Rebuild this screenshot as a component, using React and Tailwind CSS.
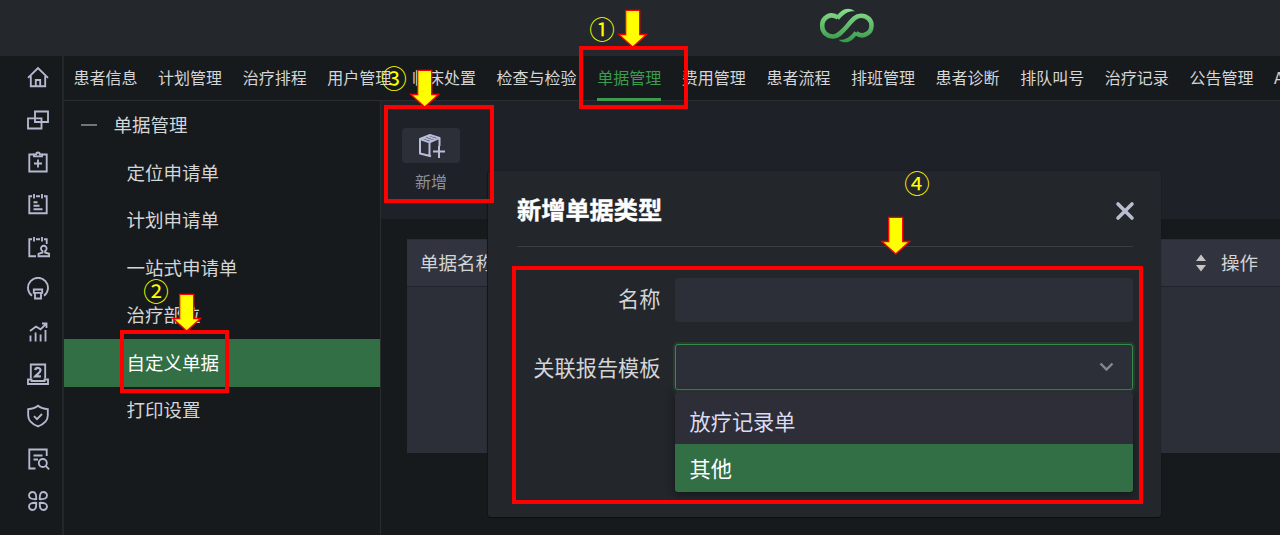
import React from "react";

const tabs = ["患者信息", "计划管理", "治疗排程", "用户管理", "临床处置", "检查与检验", "单据管理", "费用管理", "患者流程", "排班管理", "患者诊断", "排队叫号", "治疗记录", "公告管理", "AI"];
const menu = ["定位申请单", "计划申请单", "一站式申请单", "治疗部位", "自定义单据", "打印设置"];

const railIcons = [
  <><path d="M2 12.800 12 3l10 9.800" /><path d="M4.800 11V21.200h14.400V11" /><path d="M9.800 21v-6h4.400v6" /></>,
  <><path d="M9 3.500h13v10.500H9z" /><path d="M2 10.300h13.500v10.200H2z" /></>,
  <><path d="M8 4.500H3.300v17h17.400v-17H16" /><path d="M8 6.300h8V4.300h-2.200a1.800 1.800 0 0 0-3.600 0H8z" /><path d="M12 9.500v8M8 13.500h8" /></>,
  <><path d="M6 4.200H3.300V21.200h17.400V4.200H18M10 4.200h4" /><path d="M8 2v4.500M16 2v4.500M7.500 10.200h4M7.500 13.700h6M7.500 17.200h9" /></>,
  <><path d="M6 4.200H3.300V21.200H10M10 4.200h4M18 4.200h2.700V9" /><path d="M8 2v4.500M16 2v4.500" /><path d="M12.500 21.200v-2.400l4-1.300v-1.500a2.800 2.800 0 1 1 2.600 0v1.500l4 1.300v2.400z" /></>,
  <><path d="M6 18.800A10 10 0 1 1 18 18.800" /><path d="M7.800 12.500h8.400v3.400H7.800zM9 15.900h6V21.500H9z" /></>,
  <><path d="M4.500 21.500v-6M9.600 21.500v-9M14.600 21.500v-7M19.500 21.500V10" /><path d="M4 11 10 6.500l4.500 2.800L20.500 3.500M16 3.500h4.500V8" /></>,
  <><path d="M4.800 16.500V2.500h14.400v14" /><path d="M2 17.500h3.500v1.500h13v-1.500H22v4.500H2z" /><path d="M9.300 8.200c.3-3.200 5.700-2.800 5.200.3-.3 1.900-3.300 3.600-5.200 5.800h5.600" strokeWidth="2.200" /></>,
  <><path d="M12 1.800c2.700 2.200 6 3.200 9.800 3.300v6.500c0 5-4.300 8.800-9.800 10.800C6.500 20.400 2.200 16.600 2.200 11.600V5.100c3.800-.1 7.100-1.100 9.800-3.300z" /><path d="m8 12.200 3 3 5-5.200" /></>,
  <><path d="M9.500 21.500H3.300V2.500h17.400V9" /><path d="M7.500 8.500h9M7.500 12.500H12" /><circle cx="16.800" cy="16" r="4" /><path d="m19.700 18.900 3.400 3.400" /></>,
  <><path d="M10.200 10.200C10.400 5.500 9.500 3 6.700 3A3.600 3.600 0 0 0 3 6.600c0 2.900 2.700 3.700 7.200 3.600zM13.800 10.200C13.600 5.500 14.500 3 17.300 3A3.600 3.600 0 0 1 21 6.600c0 2.900-2.700 3.700-7.200 3.600zM10.200 13.800c.2 4.700-.7 7.200-3.500 7.200A3.600 3.600 0 0 1 3 17.400c0-2.900 2.700-3.700 7.200-3.600zM13.800 13.800c-.2 4.700.7 7.200 3.500 7.200a3.600 3.600 0 0 0 3.700-3.600c0-2.900-2.700-3.700-7.200-3.600z" /></>,
];

function Logo() {
  return (
    <svg className="mt-[7px] ml-[819px] h-[37px] w-[56px]" viewBox="0 0 56 37" fill="none">
      <defs>
        <linearGradient id="leaf" x1="0" y1="0" x2="0" y2="37" gradientUnits="userSpaceOnUse">
          <stop stopColor="#8ee08f" />
          <stop offset="1" stopColor="#319746" />
        </linearGradient>
      </defs>
      <path d="M19 10.600C11.500 5.500 3.200 10.500 3.200 18.500c0 7.500 6 11.500 11.300 11 4.800-.3 8-4.200 12-8.500 5-5.200 8.500-12.300 15.300-12.300 6.300 0 10.700 4.300 10.700 9.700 0 7.500-8.300 13-15.500 7.700" stroke="url(#leaf)" strokeWidth="4.600" />
      <path d="M17 10.200C22 2 29-.8 36 4.200c-6-.4-10.800 1.800-16 8.600zM38.500 26.500C33.500 35 26.500 38 19.500 32.800c6 .4 10.800-1.800 16-8.600z" fill="url(#leaf)" />
    </svg>
  );
}

function Arrow({ className }) {
  return (
    <svg className={"absolute h-[39px] w-[31px] " + className} viewBox="0 0 31 39">
      <path d="M8.700 1.300h14v24.200h6.800L15.700 38 1.900 25.500h6.800z" fill="#ff0" stroke="#f00" strokeWidth="1.300" />
    </svg>
  );
}

function Mark({ className, children }) {
  return <div className={"absolute h-[26px] w-[26px] text-center text-[25.500px] leading-[26px] text-[#ff0] " + className}>{children}</div>;
}

export default function App() {
  return (
    <div className="relative flex h-[535px] w-[1280px] flex-col overflow-hidden bg-[#171a1d] font-['Noto_Sans_CJK_SC',sans-serif] text-[#d4d5d6]">
      <header className="h-[56px] shrink-0 bg-[#24272c]">
        <Logo />
      </header>
      <div className="flex min-h-0 flex-1">
        <aside className="flex w-[64px] shrink-0 flex-col items-center gap-[18.400px] border-r-2 border-[#24262a] pt-[9.300px] pl-[14px]">
          {railIcons.map((icon, i) => (
            <svg key={i} className="h-6 w-6 shrink-0" viewBox="0 0 24 24" fill="none" stroke="#b5b9d0" strokeWidth="1.850">{icon}</svg>
          ))}
        </aside>
        <div className="flex min-w-0 flex-1 flex-col">
          <nav className="flex h-[45px] shrink-0 gap-[20.600px] border-b border-[#2a2c2e] pl-[9.500px] text-[16px] leading-[43px] whitespace-nowrap">
            {tabs.map((t) => (
              <div key={t} className={t === "单据管理" ? "relative shrink-0 text-[#3a9c4c] after:absolute after:inset-x-0 after:-bottom-px after:h-[3px] after:bg-[#3a9c4c]" : "shrink-0"}>{t}</div>
            ))}
          </nav>
          <div className="flex min-h-0 flex-1">
            <div className="flex w-[317px] shrink-0 flex-col border-r border-[#2a2c2e] text-[18.500px] whitespace-nowrap">
              <div className="flex h-[48px] items-center">
                <span className="ml-[17px] h-[1.500px] w-[16px] bg-[#70747d]" />
                <span className="ml-[16.500px]">单据管理</span>
              </div>
              {menu.map((m) => (
                <div key={m} className={m === "自定义单据" ? "flex h-[47.500px] items-center bg-[#326f44] pl-[62.500px] text-white" : "flex h-[47.500px] items-center pl-[62.500px]"}>{m}</div>
              ))}
            </div>
            <main className="flex min-w-0 flex-1 flex-col">
              <div className="h-[118px] shrink-0 bg-[#1f2129] pt-[27px] pl-[21px]">
                <div className="flex w-[58px] flex-col items-center">
                  <div className="flex h-[35px] w-full items-center justify-center rounded-sm bg-[#2c2f37]">
                    <svg className="h-[26px] w-[28px]" viewBox="0 0 28 26" fill="none" stroke="#b9bdd8" strokeWidth="2" strokeLinejoin="round">
                      <path d="M14 23.300 3 20.500V6L13 2l9.500 2.900v8M3 6l9.500 3.400 10-4.500M12.500 9.400v13.300M6.500 4.900l9.500 3M10 3.400l9 3.100M16 18.500h12M22 13v12" />
                    </svg>
                  </div>
                  <span className="mt-[6px] text-[16px] leading-6 text-[#8d909a]">新增</span>
                </div>
              </div>
              <section className="mt-[20px] ml-[26px] h-[214px] bg-[#2c2f37]">
                <div className="flex h-[48px] items-center border-t border-b border-t-[#2b2f34] border-b-[#20242a] bg-[#31343f] text-[18.500px]">
                  <span className="ml-[13px] w-[775px]">单据名称</span>
                  <svg className="h-[18px] w-[12px]" viewBox="0 0 12 18" fill="#c4c4c4"><path d="m6 0.500 5 6.500H1zM1 11h10l-5 6.500z" /></svg>
                  <span className="ml-[14px]">操作</span>
                </div>
              </section>
            </main>
          </div>
        </div>
      </div>

      <div className="absolute top-[171px] left-[488px] flex h-[346px] w-[673px] flex-col rounded-[3px] bg-[#23262b] pr-[28px] pl-[29px] shadow-[0_1px_1px_#0c0e10,-1px_0_1px_#14171a]">
        <div className="flex h-[76px] shrink-0 items-center justify-between border-b border-[#3a3d46] pt-[2px]">
          <h2 className="text-[24.200px] font-bold text-white [-webkit-text-stroke:0.400px_white]">新增单据类型</h2>
          <svg className="mt-[3px] -mr-[2px] h-5 w-5" viewBox="0 0 20 20" stroke="#b9bdd0" strokeWidth="3.600" strokeLinecap="round"><path d="m3 3 14 14M17 3 3 17" /></svg>
        </div>
        <div className="mt-[31px] flex h-[44px] items-center text-[21.200px]">
          <label className="-mt-[4px] w-[143.500px] text-right">名称</label>
          <div className="ml-[14.500px] h-full flex-1 rounded-[3px] bg-[#2c2f37]" />
        </div>
        <div className="mt-[22px] flex h-[46px] items-center text-[21.200px]">
          <label className="w-[143.500px] text-right whitespace-nowrap">关联报告模板</label>
          <div className="ml-[14.500px] flex h-full flex-1 items-center justify-end rounded-[3px] border border-[#35894a] bg-[#2c2f37] pr-[18px] shadow-[0_0_0_2px_#263c31]">
            <svg className="h-[10px] w-[15px]" viewBox="0 0 15 10" fill="none" stroke="#858894" strokeWidth="2.400"><path d="m1.500 1.500 6 6 6-6" /></svg>
          </div>
        </div>
        <div className="mt-[2px] ml-[158px] h-[100px] overflow-hidden rounded-[3px] bg-[#2d2e37] text-[21.200px] shadow-[0_3px_9px_#14171a]">
          <div className="flex h-[52px] items-center pt-[5px] pl-[14.500px] text-[#dadcf4]">放疗记录单</div>
          <div className="flex h-[48px] items-center bg-[#326f44] pl-[14.500px] text-white">其他</div>
        </div>
      </div>

      <div className="absolute top-[46px] left-[579px] h-[63px] w-[109px] border-4 border-[#f00]" />
      <div className="absolute top-[105px] left-[384px] h-[98px] w-[110px] border-4 border-[#f00]" />
      <div className="absolute top-[330px] left-[120px] h-[63px] w-[109px] border-4 border-[#f00]" />
      <div className="absolute top-[266px] left-[512px] h-[238px] w-[631px] border-4 border-[#f00]" />
      <Arrow className="top-[9px] left-[617px]" />
      <Arrow className="top-[69px] left-[409px]" />
      <Arrow className="top-[293px] left-[171px]" />
      <Arrow className="top-[216px] left-[880px]" />
      <Mark className="top-[15px] left-[589px]">①</Mark>
      <Mark className="top-[277px] left-[143px]">②</Mark>
      <Mark className="top-[64px] left-[381px]">③</Mark>
      <Mark className="top-[169px] left-[904px]">④</Mark>
    </div>
  );
}
